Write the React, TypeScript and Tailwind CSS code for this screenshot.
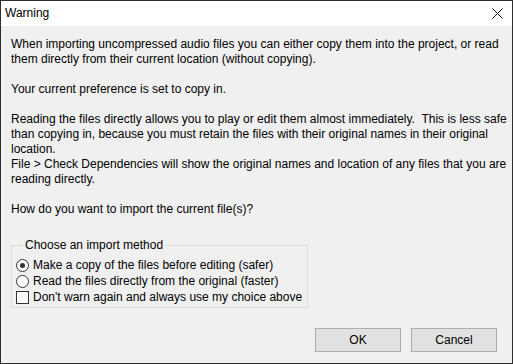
import React from 'react'

const font = { fontFamily: '"Liberation Sans", Arial, sans-serif' }

const lines = [
  'When importing uncompressed audio files you can either copy them into the project, or read',
  'them directly from their current location (without copying).',
  '',
  'Your current preference is set to copy in.',
  '',
  'Reading the files directly allows you to play or edit them almost immediately.  This is less safe',
  'than copying in, because you must retain the files with their original names in their original',
  'location.',
  'File > Check Dependencies will show the original names and location of any files that you are',
  'reading directly.',
  '',
  'How do you want to import the current file(s)?',
]

const Radio = ({ checked, label }: { checked?: boolean; label: string }) => (
  <div className="flex h-[16px] items-center gap-[4px]">
    <span className="flex h-[13px] w-[13px] items-center justify-center rounded-full border border-[#333333] bg-white">
      {checked && <span className="h-[5px] w-[5px] rounded-full bg-[#333333]" />}
    </span>
    <span>{label}</span>
  </div>
)

const Check = ({ label }: { label: string }) => (
  <div className="flex h-[16px] items-center gap-[4px]">
    <span className="h-[13px] w-[13px] border border-[#333333] bg-white" />
    <span>{label}</span>
  </div>
)

export default function App() {
  return (
    <div
      className="flex h-[364px] w-[513px] flex-col border border-[#2e2e2e] bg-[#f0f0f0] text-[12px] leading-[15px] text-black"
      style={font}
    >
      {/* title bar */}
      <div className="flex h-[25px] shrink-0 items-center justify-between bg-white pl-[4px]">
        <span>Warning</span>
        <div className="flex h-[25px] w-[45px] items-center justify-center">
          <svg width="11" height="11" viewBox="0 0 11 11" className="ml-[16px]">
            <path d="M0.5 0.5 L10.5 10.5 M10.5 0.5 L0.5 10.5" stroke="#111" strokeWidth="1" fill="none" />
          </svg>
        </div>
      </div>

      <div className="flex flex-1 flex-col px-[10px] pt-[11px]">
        <div>
          {lines.map((l, i) => (
            <div key={i} className="h-[15px] whitespace-pre">
              {l}
            </div>
          ))}
        </div>

        <fieldset className="mt-[20px] w-[297px] border border-[#dcdcdc] pb-[2px] pl-[4px] pt-[4px]">
          <legend className="ml-[7px] px-[2px] leading-[16px]">Choose an import method</legend>
          <Radio checked label="Make a copy of the files before editing (safer)" />
          <Radio label="Read the files directly from the original (faster)" />
          <Check label="Don't warn again and always use my choice above" />
        </fieldset>

        <div className="mt-auto mb-[11px] flex justify-end gap-[10px] pr-[5px]">
          <button className="h-[24px] w-[86px] border border-[#adadad] bg-[#e1e1e1]">OK</button>
          <button className="h-[24px] w-[86px] border border-[#adadad] bg-[#e1e1e1]">Cancel</button>
        </div>
      </div>
    </div>
  )
}
